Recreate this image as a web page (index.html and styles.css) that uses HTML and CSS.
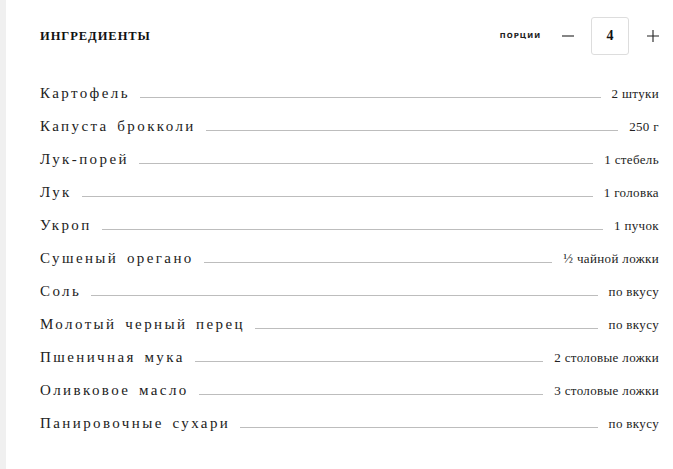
FILE: index.html
```html
<!DOCTYPE html>
<html lang="ru">
<head>
<meta charset="utf-8">
<link rel="stylesheet" href="styles.css">
</head>
<body>
<div class="page">
  <div class="header">
    <h2 class="title">ИНГРЕДИЕНТЫ</h2>
    <div class="portions">
      <span class="portions-label">ПОРЦИИ</span>
      <button class="step">
        <svg width="12" height="12" viewBox="0 0 12 12"><path d="M0 6H12" stroke="#222" stroke-width="1.1"/></svg>
      </button>
      <div class="count">4</div>
      <button class="step">
        <svg width="12" height="12" viewBox="0 0 12 12"><path d="M0 6H12M6 0V12" stroke="#222" stroke-width="1.1"/></svg>
      </button>
    </div>
  </div>
  <ul class="list">
    <li class="row"><span class="name">Картофель</span><span class="dots"></span><span class="qty">2 штуки</span></li>
    <li class="row"><span class="name">Капуста брокколи</span><span class="dots"></span><span class="qty">250 г</span></li>
    <li class="row"><span class="name">Лук-порей</span><span class="dots"></span><span class="qty">1 стебель</span></li>
    <li class="row"><span class="name">Лук</span><span class="dots"></span><span class="qty">1 головка</span></li>
    <li class="row"><span class="name">Укроп</span><span class="dots"></span><span class="qty">1 пучок</span></li>
    <li class="row"><span class="name">Сушеный орегано</span><span class="dots"></span><span class="qty">½ чайной ложки</span></li>
    <li class="row"><span class="name">Соль</span><span class="dots"></span><span class="qty">по вкусу</span></li>
    <li class="row"><span class="name">Молотый черный перец</span><span class="dots"></span><span class="qty">по вкусу</span></li>
    <li class="row"><span class="name">Пшеничная мука</span><span class="dots"></span><span class="qty">2 столовые ложки</span></li>
    <li class="row"><span class="name">Оливковое масло</span><span class="dots"></span><span class="qty">3 столовые ложки</span></li>
    <li class="row"><span class="name">Панировочные сухари</span><span class="dots"></span><span class="qty">по вкусу</span></li>
  </ul>
</div>
</body>
</html>
```
FILE: styles.css
```css
html, body {
  margin: 0;
  padding: 0;
  background: #fff;
}
body {
  font-family: "Liberation Serif", serif;
  color: #222;
}
.page {
  border-left: 6px solid #f0f0f0;
  padding: 17px 14px 0 34px;
  min-height: 452px;
}
.header {
  display: flex;
  align-items: center;
  justify-content: space-between;
  height: 38px;
}
.title {
  margin: 0;
  font-family: "Liberation Serif", serif;
  font-size: 12.5px;
  font-weight: bold;
  letter-spacing: 0.95px;
  color: #111;
}
.portions {
  display: flex;
  align-items: center;
}
.portions-label {
  font-family: "DejaVu Sans", sans-serif;
  font-size: 7px;
  font-weight: bold;
  letter-spacing: 1px;
  color: #222;
  margin-right: 21px;
}
.step {
  border: 0;
  background: none;
  padding: 0;
  width: 12px;
  height: 12px;
  display: flex;
  cursor: pointer;
}
.count {
  width: 36px;
  height: 36px;
  border: 1px solid #ddd;
  border-radius: 3px;
  margin: 0 18px 0 17px;
  display: flex;
  align-items: center;
  justify-content: center;
  font-family: "Liberation Serif", serif;
  font-weight: bold;
  font-size: 14px;
  color: #111;
}
.list {
  list-style: none;
  margin: 22px 0 0;
  padding: 0;
}
.row {
  display: flex;
  align-items: baseline;
  height: 33px;
  line-height: 33px;
}
.name {
  font-family: "Liberation Serif", serif;
  font-size: 15px;
  letter-spacing: 2.4px;
  word-spacing: 2.5px;
  color: #222;
}
.dots {
  flex: 1;
  border-bottom: 1px solid #bdbdbd;
  margin: 0 11px 0 10px;
  height: 0;
}
.qty {
  font-family: "Liberation Serif", serif;
  font-size: 13px;
  letter-spacing: 0.35px;
  color: #222;
}
```
